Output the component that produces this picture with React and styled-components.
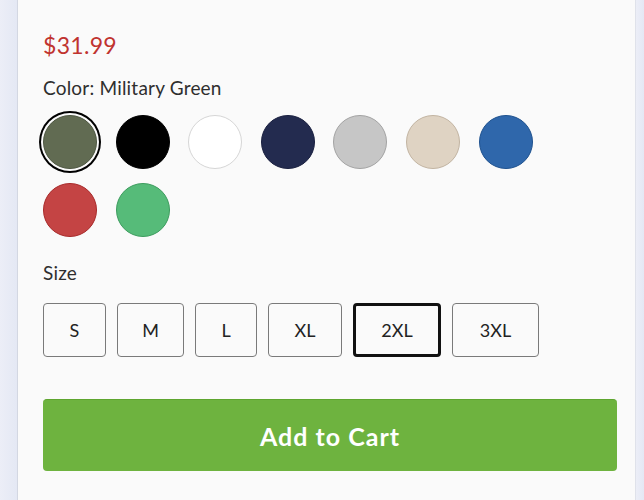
import React from "react";
import styled, { createGlobalStyle } from "styled-components";

const Global = createGlobalStyle`
  html, body { margin: 0; padding: 0; background: #e9ecf6; }
  body { font-family: "Lato", "Noto Sans", sans-serif; }
  * { box-sizing: border-box; }
`;

const Page = styled.div`
  display: flex;
  width: 644px;
  height: 500px;
  background: #e9ecf6;
  overflow: hidden;
`;

const Gutter = styled.div`
  width: ${(p) => p.$w}px;
  flex: none;
  background: linear-gradient(90deg, #eceef7, #e4e8f4);
`;

const Panel = styled.main`
  width: 619px;
  flex: none;
  background: #fafafa;
  border-left: 1px solid #d3d7e2;
  border-right: 1px solid #dfe2ea;
  padding: 31px 19px 0 25px;
  display: flex;
  flex-direction: column;
  color: #2b2b2b;
`;

const Price = styled.div`
  font-size: 23px;
  line-height: 28px;
  color: #c0332f;
  letter-spacing: 0.3px;
`;

const Label = styled.div`
  font-size: 19px;
  line-height: 24px;
  color: #2e2e2e;
  letter-spacing: 0.2px;
  margin-top: ${(p) => p.$mt}px;
`;

const Swatches = styled.div`
  display: flex;
  flex-wrap: wrap;
  column-gap: 18.6px;
  row-gap: 14px;
  margin-top: 15px;
  width: 520px;
`;

const Swatch = styled.button`
  width: 54px;
  height: 54px;
  border-radius: 50%;
  padding: 0;
  cursor: pointer;
  background: ${(p) => p.$fill};
  border: 1px solid ${(p) => p.$edge};
  box-shadow: ${(p) =>
    p.$selected ? "0 0 0 2px #fafafa, 0 0 0 4px #000" : "none"};
`;

const Sizes = styled.div`
  display: flex;
  gap: 11px;
  margin-top: 18px;
`;

const SizeButton = styled.button`
  width: ${(p) => p.$w}px;
  height: 54px;
  padding: 0;
  background: #fafafa;
  border: ${(p) => (p.$selected ? "3px solid #111" : "1px solid #7a7a7a")};
  border-radius: 4px;
  font-family: "Lato", "Noto Sans", sans-serif;
  font-size: 18px;
  color: #222;
  cursor: pointer;
`;

const CartButton = styled.button`
  margin-top: 42px;
  width: 574px;
  height: 72px;
  background: #6eb33f;
  border: none;
  border-top: 1px solid #5ea52f;
  border-radius: 4px;
  color: #fff;
  font-family: "Lato", "Noto Sans", sans-serif;
  font-weight: 700;
  font-size: 25px;
  letter-spacing: 1px;
  cursor: pointer;
`;

const colors = [
  { name: "Military Green", fill: "#616b52", edge: "#4e5742" },
  { name: "Black", fill: "#000", edge: "#000" },
  { name: "White", fill: "#fff", edge: "#d6d6d6" },
  { name: "Navy", fill: "#232b4f", edge: "#1a2040" },
  { name: "Gray", fill: "#c6c6c6", edge: "#a3a3a3" },
  { name: "Sand", fill: "#dfd3c3", edge: "#c2b4a2" },
  { name: "Royal", fill: "#2f67ab", edge: "#1f528f" },
  { name: "Red", fill: "#c44444", edge: "#a82a2a" },
  { name: "Kelly", fill: "#56bb79", edge: "#3d9c5e" },
];

const sizes = [
  { label: "S", w: 63 },
  { label: "M", w: 67 },
  { label: "L", w: 62 },
  { label: "XL", w: 74 },
  { label: "2XL", w: 88 },
  { label: "3XL", w: 87 },
];

export default function App() {
  return (
    <>
      <Global />
      <Page>
        <Gutter $w={17} />
        <Panel>
          <Price>$31.99</Price>
          <Label $mt={17}>Color: Military Green</Label>
          <Swatches>
            {colors.map((c, i) => (
              <Swatch
                key={c.name}
                aria-label={c.name}
                $fill={c.fill}
                $edge={c.edge}
                $selected={i === 0}
              />
            ))}
          </Swatches>
          <Label $mt={24}>Size</Label>
          <Sizes>
            {sizes.map((s) => (
              <SizeButton key={s.label} $w={s.w} $selected={s.label === "2XL"}>
                {s.label}
              </SizeButton>
            ))}
          </Sizes>
          <CartButton>Add to Cart</CartButton>
        </Panel>
        <Gutter $w={8} />
      </Page>
    </>
  );
}
